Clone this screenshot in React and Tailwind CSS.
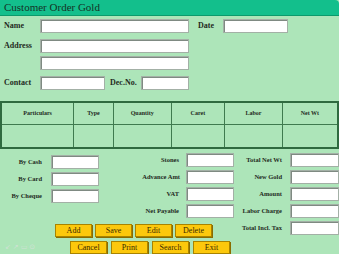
import React from 'react';

const Field = ({ className = '' }) => (
  <input
    type="text"
    className={`h-[14px] bg-white border border-[#a3b0a6] shadow-[inset_1px_1px_0_#7f8a82] outline-none ${className}`}
  />
);

const Btn = ({ label }) => (
  <button className="w-[37px] h-[13px] bg-[#fcc80c] border border-[#a88300] shadow-[1px_1px_0_#8a6c00] text-[8px] leading-none text-[#3a2a00]">
    {label}
  </button>
);

const Row = ({ label, labelW, gap, inputW }) => (
  <div className="flex items-center h-[14px]">
    <span className={`${labelW} text-right font-bold text-[6.5px] text-[#1f2a22]`}>{label}</span>
    <Field className={`${gap} ${inputW}`} />
  </div>
);

const cols = ['Particulars', 'Type', 'Quantity', 'Caret', 'Labor', 'Net Wt'];
const widths = ['w-[73px]', 'w-[40px]', 'w-[58px]', 'w-[54px]', 'w-[58px]', 'w-[56px]'];

export default function App() {
  return (
    <div className="w-[339px] h-[254px] overflow-hidden bg-[#ade5b9] font-['Liberation_Serif',serif] text-[#1f2a22]">
      <div className="h-[16px] bg-[#13bf8c] border-b border-[#0c9a6c] rounded-tr-[4px] px-[4px] flex items-center">
        <span className="text-[11px] leading-none text-[#143326]">Customer Order Gold</span>
      </div>

      <div className="mt-[3px] flex items-center h-[14px]">
        <span className="w-[40px] pl-[4px] font-bold text-[8px]">Name</span>
        <Field className="w-[149px]" />
        <span className="ml-[9px] w-[25px] font-bold text-[8px]">Date</span>
        <Field className="w-[65px]" />
      </div>

      <div className="mt-[6px] flex items-center h-[14px]">
        <span className="w-[40px] pl-[4px] font-bold text-[8px]">Address</span>
        <Field className="w-[149px]" />
      </div>
      <div className="mt-[3px] flex items-center h-[14px]">
        <span className="w-[40px]" />
        <Field className="w-[149px]" />
      </div>

      <div className="mt-[6px] flex items-center h-[14px]">
        <span className="w-[40px] pl-[4px] font-bold text-[8px]">Contact</span>
        <Field className="w-[65px]" />
        <span className="ml-[5px] w-[31px] font-bold text-[8px]">Dec.No.</span>
        <Field className="w-[48px]" />
      </div>

      <table className="mt-[11px] w-[339px] border-collapse border-2 border-[#2f6a3f]">
        <thead>
          <tr className="h-[22px]">
            {cols.map((c, i) => (
              <th key={c} className={`${widths[i]} border border-[#3f7a4f] text-[6px] font-bold text-center`}>
                {c}
              </th>
            ))}
          </tr>
        </thead>
        <tbody>
          <tr className="h-[24px]">
            {cols.map((c) => (
              <td key={c} className="border border-[#3f7a4f]" />
            ))}
          </tr>
        </tbody>
      </table>

      <div className="mt-[4px] flex">
        <div className="w-[240px]">
          <div className="flex">
            <div className="w-[100px] pt-[2px] flex flex-col gap-[3px]">
              <Row label="By Cash" labelW="w-[42px]" gap="ml-[9px]" inputW="w-[48px]" />
              <Row label="By Card" labelW="w-[42px]" gap="ml-[9px]" inputW="w-[48px]" />
              <Row label="By Cheque" labelW="w-[42px]" gap="ml-[9px]" inputW="w-[48px]" />
            </div>
            <div className="flex flex-col gap-[3px]">
              <Row label="Stones" labelW="w-[79px]" gap="ml-[7px]" inputW="w-[48px]" />
              <Row label="Advance Amt" labelW="w-[80px]" gap="ml-[6px]" inputW="w-[48px]" />
              <Row label="VAT" labelW="w-[79px]" gap="ml-[7px]" inputW="w-[48px]" />
              <Row label="Net Payable" labelW="w-[79px]" gap="ml-[7px]" inputW="w-[48px]" />
            </div>
          </div>
          <div className="mt-[6px] pl-[55px] flex gap-[3px]">
            <Btn label="Add" />
            <Btn label="Save" />
            <Btn label="Edit" />
            <Btn label="Delete" />
          </div>
          <div className="mt-[4px] flex items-center">
            <span className="w-[70px] pl-[5px] text-[7px] text-[#cfe2d5] font-['DejaVu_Sans',sans-serif] tracking-[2px]">↙↗▭⊙</span>
            <div className="flex gap-[4px]">
              <Btn label="Cancel" />
              <Btn label="Print" />
              <Btn label="Search" />
              <Btn label="Exit" />
            </div>
          </div>
        </div>
        <div className="flex flex-col gap-[3px]">
          <Row label="Total Net Wt" labelW="w-[42px]" gap="ml-[8px]" inputW="w-[49px]" />
          <Row label="New Gold" labelW="w-[42px]" gap="ml-[8px]" inputW="w-[49px]" />
          <Row label="Amount" labelW="w-[42px]" gap="ml-[8px]" inputW="w-[49px]" />
          <Row label="Labor Charge" labelW="w-[42px]" gap="ml-[8px]" inputW="w-[49px]" />
          <Row label="Total Incl. Tax" labelW="w-[42px]" gap="ml-[8px]" inputW="w-[49px]" />
        </div>
      </div>
    </div>
  );
}
